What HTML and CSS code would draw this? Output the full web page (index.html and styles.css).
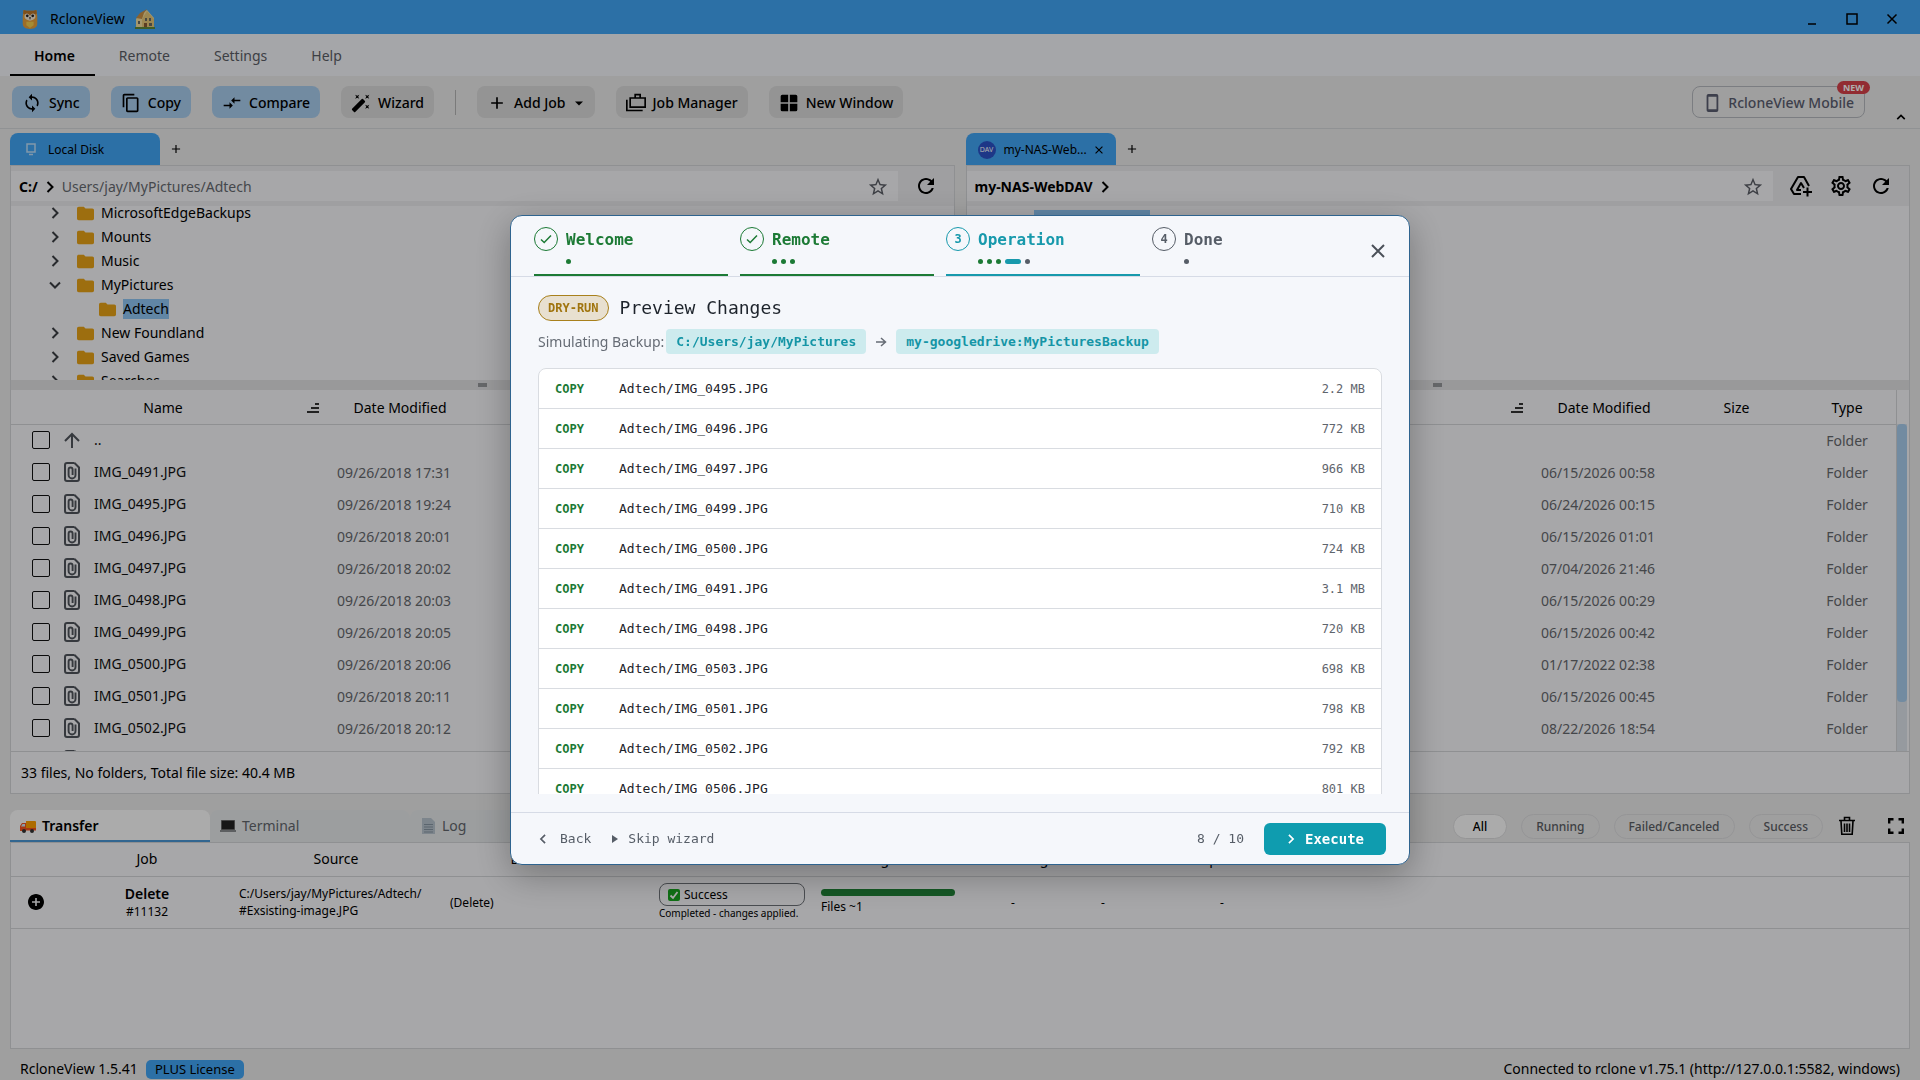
FILE: index.html
```html
<!DOCTYPE html>
<html lang="en">
<head>
<meta charset="utf-8">
<title>RcloneView</title>
<link rel="stylesheet" href="styles.css">
</head>
<body>
<svg class="sprite" aria-hidden="true">
  <symbol id="i-sync" viewBox="0 0 24 24"><path d="M12 4V1L8 5l4 4V6c3.31 0 6 2.69 6 6 0 1.01-.25 1.97-.7 2.8l1.46 1.46C19.54 15.03 20 13.57 20 12c0-4.42-3.58-8-8-8zm0 14c-3.31 0-6-2.69-6-6 0-1.01.25-1.97.7-2.8L5.24 7.74C4.46 8.97 4 10.43 4 12c0 4.42 3.58 8 8 8v3l4-4-4-4v3z"/></symbol>
  <symbol id="i-copy" viewBox="0 0 24 24"><path d="M16 1H4c-1.1 0-2 .9-2 2v14h2V3h12V1zm3 4H8c-1.1 0-2 .9-2 2v14c0 1.1.9 2 2 2h11c1.1 0 2-.9 2-2V7c0-1.1-.9-2-2-2zm0 16H8V7h11v14z"/></symbol>
  <symbol id="i-compare" viewBox="0 0 24 24"><path d="M9.01 14H2v2h7.01v3L13 15l-3.99-4v3zm5.98-1v-3H22V8h-7.01V5L11 9l3.99 4z"/></symbol>
  <symbol id="i-wizard" viewBox="0 0 24 24"><path d="M7.5 5.6L10 7 8.6 4.5 10 2 7.5 3.4 5 2l1.4 2.5L5 7zm12 9.8L17 14l1.4 2.5L17 19l2.5-1.4L22 19l-1.4-2.5L22 14zM22 2l-2.5 1.4L17 2l1.4 2.5L17 7l2.5-1.4L22 7l-1.4-2.5zm-7.63 5.29a1 1 0 00-1.41 0L1.29 18.96c-.39.39-.39 1.02 0 1.41l2.34 2.34c.39.39 1.02.39 1.41 0L16.7 11.05c.39-.39.39-1.02 0-1.41l-2.33-2.35z"/></symbol>
  <symbol id="i-add" viewBox="0 0 24 24"><path d="M19 13h-6v6h-2v-6H5v-2h6V5h2v6h6v2z"/></symbol>
  <symbol id="i-drop" viewBox="0 0 24 24"><path d="M4 9l8 8 8-8z"/></symbol>
  <symbol id="i-jobs" viewBox="0 0 24 24"><path fill="none" stroke="currentColor" stroke-width="2" d="M1 8v13h19M5 6h18v11H5zM11 6V2h6v4"/></symbol>
  <symbol id="i-window" viewBox="0 0 24 24"><path d="M4 2h7v9H2V4a2 2 0 012-2zm9 0h7a2 2 0 012 2v7h-9V2zM2 13h9v9H4a2 2 0 01-2-2v-7zm11 0h9v7a2 2 0 01-2 2h-7v-9z"/></symbol>
  <symbol id="i-phone" viewBox="0 0 16 20"><path fill-rule="evenodd" d="M4 0h9a2 2 0 012 2v16a2 2 0 01-2 2H4a2 2 0 01-2-2V2a2 2 0 012-2zm0 3v14h9V3z"/></symbol>
  <symbol id="i-refresh" viewBox="0 0 24 24"><path d="M17.65 6.35C16.2 4.9 14.21 4 12 4c-4.42 0-7.990 3.58-7.990 8s3.570 8 7.990 8c3.730 0 6.840-2.550 7.730-6h-2.080c-.82 2.330-3.040 4-5.650 4-3.310 0-6-2.690-6-6s2.690-6 6-6c1.660 0 3.140.69 4.220 1.780L13 11h7V4l-2.350 2.350z"/></symbol>
  <symbol id="i-star" viewBox="0 0 24 24"><path d="M22 9.24l-7.19-.62L12 2 9.19 8.63 2 9.24l5.46 4.73L5.82 21 12 17.27 18.18 21l-1.63-7.03L22 9.24zM12 15.4l-3.76 2.27 1-4.28-3.32-2.88 4.38-.38L12 6.1l1.71 4.04 4.38.38-3.32 2.88 1 4.28L12 15.4z"/></symbol>
  <symbol id="i-gear" viewBox="0 0 24 24"><path d="M19.43 12.98c.04-.32.07-.64.07-.98 0-.34-.03-.66-.07-.98l2.11-1.65c.19-.15.24-.42.12-.64l-2-3.46c-.09-.16-.26-.25-.44-.25-.06 0-.12.01-.17.03l-2.49 1c-.52-.4-1.08-.73-1.69-.98l-.38-2.65C14.46 2.18 14.25 2 14 2h-4c-.25 0-.46.18-.49.42l-.38 2.65c-.61.25-1.17.59-1.69.98l-2.49-1c-.06-.02-.12-.03-.18-.03-.17 0-.34.09-.43.25l-2 3.46c-.13.22-.07.49.12.64l2.11 1.65c-.04.32-.07.65-.07.98 0 .33.03.66.07.98l-2.11 1.65c-.19.15-.24.42-.12.64l2 3.46c.09.16.26.25.44.25.06 0 .12-.01.17-.03l2.49-1c.52.4 1.08.73 1.69.98l.38 2.65c.03.24.24.42.49.42h4c.25 0 .46-.18.49-.42l.38-2.65c.61-.25 1.17-.59 1.69-.98l2.49 1c.06.02.12.03.18.03.17 0 .34-.09.43-.25l2-3.46c.12-.22.07-.49-.12-.64l-2.11-1.65zm-1.98-1.71c.04.31.05.52.05.73 0 .21-.02.43-.05.73l-.14 1.13.89.7 1.08.84-.7 1.21-1.27-.51-1.04-.42-.9.68c-.43.32-.84.56-1.25.73l-1.06.43-.16 1.13-.2 1.35h-1.4l-.19-1.35-.16-1.13-1.06-.43c-.43-.18-.83-.41-1.23-.71l-.91-.7-1.06.43-1.27.51-.7-1.21 1.08-.84.89-.7-.14-1.13c-.03-.31-.05-.54-.05-.74s.02-.43.05-.73l.14-1.13-.89-.7-1.08-.84.7-1.21 1.27.51 1.04.42.9-.68c.43-.32.84-.56 1.25-.73l1.06-.43.16-1.13.2-1.35h1.39l.19 1.35.16 1.13 1.06.43c.43.18.83.41 1.23.71l.91.7 1.06-.43 1.27-.51.7 1.21-1.07.85-.89.7.14 1.13zM12 8c-2.21 0-4 1.79-4 4s1.79 4 4 4 4-1.79 4-4-1.79-4-4-4zm0 6c-1.1 0-2-.9-2-2s.9-2 2-2 2 .9 2 2-.9 2-2 2z"/></symbol>
  <symbol id="i-drive" viewBox="0 0 24 24"><path fill="none" stroke="currentColor" stroke-width="2" stroke-linejoin="round" d="M12 20H5l-3-5L9 3h6l5 9M12 16H8l4-7 3 5M14 18h9M18.500 13.500v9"/></symbol>
  <symbol id="i-folder" viewBox="2 4 20 16"><path d="M10 4H4c-1.100 0-1.990.9-1.990 2L2 18c0 1.100.9 2 2 2h16c1.100 0 2-.9 2-2V8c0-1.100-.9-2-2-2h-8l-2-2z"/></symbol>
  <symbol id="i-right" viewBox="0 0 12 12"><path fill="none" stroke="currentColor" stroke-width="2" d="M3.500 1l5 5-5 5"/></symbol>
  <symbol id="i-left" viewBox="0 0 12 12"><path fill="none" stroke="currentColor" stroke-width="2" d="M8.500 1l-5 5 5 5"/></symbol>
  <symbol id="i-down" viewBox="0 0 12 12"><path fill="none" stroke="currentColor" stroke-width="2" d="M1 3.500l5 5 5-5"/></symbol>
  <symbol id="i-up" viewBox="0 0 12 12"><path fill="none" stroke="currentColor" stroke-width="2" d="M1.500 8.500L6 4l4.500 4.500"/></symbol>
  <symbol id="i-close" viewBox="0 0 14 14"><path fill="none" stroke="currentColor" stroke-width="2" d="M1 1l12 12M13 1L1 13"/></symbol>
  <symbol id="i-sort" viewBox="0 0 12 12"><path d="M8 1h4v2H8zM4 5h8v2H4zM0 9h12v2H0z"/></symbol>
  <symbol id="i-arrow-up" viewBox="0 0 16 16"><path fill="none" stroke="currentColor" stroke-width="2" d="M8 16V2M1 9l7-7 7 7"/></symbol>
  <symbol id="i-file" viewBox="0 0 16 20"><path fill="none" stroke="currentColor" stroke-width="2" d="M10.500 1H3a2 2 0 00-2 2v14a2 2 0 002 2h10a2 2 0 002-2V5.500L10.500 1"/><path fill="none" stroke="currentColor" stroke-width="1.900" d="M11.500 6.500V13a3.400 3.400 0 01-6.900 0V7.500a2 2 0 014 0V13"/></symbol>
  <symbol id="i-plus-circle" viewBox="2 2 20 20"><path d="M12 2C6.480 2 2 6.480 2 12s4.480 10 10 10 10-4.480 10-10S17.520 2 12 2zm5 11h-4v4h-2v-4H7v-2h4V7h2v4h4v2z"/></symbol>
  <symbol id="i-trash" viewBox="0 0 16 20"><path fill="none" stroke="currentColor" stroke-width="1.600" d="M0 4.500h16M5.500 4V1.500h5V4M2 5l.8 13.200H13.200L14 5M5.500 7.500v8.500M8 7.500v8.500M10.500 7.500v8.500"/></symbol>
  <symbol id="i-full" viewBox="0 0 16 16"><path fill="none" stroke="currentColor" stroke-width="2.400" d="M1.200 5.500V1.200h4.300M10.500 1.200h4.300v4.300M14.800 10.500v4.300h-4.300M5.500 14.800H1.200v-4.300"/></symbol>
  <symbol id="i-check" viewBox="0 0 12 12"><path fill="none" stroke="currentColor" stroke-width="1.500" d="M1 6.500l3.200 3L11 2.500"/></symbol>
  <symbol id="i-arrow" viewBox="0 0 12 12"><path fill="none" stroke="currentColor" stroke-width="1.500" d="M1 6h9M6 2l4.500 4L6 10"/></symbol>
  <symbol id="i-play" viewBox="0 0 8 8"><path d="M1 0l6 4-6 4z"/></symbol>
</svg>

<div class="app">
  <header class="titlebar">
    <svg class="owl" viewBox="0 0 18 22"><path fill="#e9a13a" d="M2 1l3 1h8l3-1 1 7v8c0 4-3 6-8 6s-8-2-8-6V8z"/><path fill="#b9762a" d="M2 1l3 1h8l3-1 .6 4L9 9 1.400 5z"/><path fill="#f5ead6" d="M9 8C8 4 3 4 3 8s4 4 6 5c2-1 6-1 6-5s-5-4-6 0z"/><circle cx="6" cy="7.500" r="1.500" fill="#222"/><circle cx="12" cy="7.500" r="1.500" fill="#222"/><path fill="#222" d="M8 9h2l-1 3z"/><path fill="#f6cf4c" d="M5 14h8v4l-4 3-4-3z"/></svg>
    <span class="app-name">RcloneView</span>
    <svg class="house" viewBox="0 0 20 20"><path fill="#f3dfa0" d="M1 10l4-5 7-4 7 8v10H1z"/><path fill="#c98f45" d="M1 9l4-5 7-4-3 4-2 6z"/><path fill="#e6c878" d="M7 10l5-8 7 8v9H7z"/><path fill="#6b6a62" d="M3 12h2v3H3zm7-3h2v3h-2zm4 0h2v3h-2zm0 5h3v3h-3z"/><path fill="#8a5a34" d="M9 14h3v5H9z"/><path fill="#5d8a3a" d="M0 18h20v2H0z"/></svg>
    <div class="window-buttons">
      <button type="button" aria-label="Minimize"><svg viewBox="0 0 12 12"><path fill="none" stroke="#000" stroke-width="1.500" d="M2 11h8"/></svg></button>
      <button type="button" aria-label="Maximize"><svg viewBox="0 0 12 12"><path fill="none" stroke="#000" stroke-width="1.500" d="M1 1h10v10H1z"/></svg></button>
      <button type="button" aria-label="Close window"><svg viewBox="0 0 12 12"><path fill="none" stroke="#000" stroke-width="1.500" d="M1.500 1.500l9 9M10.500 1.500l-9 9"/></svg></button>
    </div>
  </header>

  <nav class="menu">
    <a href="#home" class="active">Home</a>
    <a href="#remote">Remote</a>
    <a href="#settings">Settings</a>
    <a href="#help">Help</a>
  </nav>

  <div class="toolbar">
    <button type="button" class="tool primary"><svg class="ico20"><use href="#i-sync"/></svg>Sync</button>
    <button type="button" class="tool primary"><svg class="ico20"><use href="#i-copy"/></svg>Copy</button>
    <button type="button" class="tool primary"><svg class="ico20"><use href="#i-compare"/></svg>Compare</button>
    <button type="button" class="tool"><svg class="ico20"><use href="#i-wizard"/></svg>Wizard</button>
    <span class="tool-sep"></span>
    <button type="button" class="tool"><svg class="ico20"><use href="#i-add"/></svg>Add Job<svg class="ico12"><use href="#i-drop"/></svg></button>
    <button type="button" class="tool"><svg class="ico20"><use href="#i-jobs"/></svg>Job Manager</button>
    <button type="button" class="tool"><svg class="ico20"><use href="#i-window"/></svg>New Window</button>
    <button type="button" class="tool mobile"><svg class="ico18"><use href="#i-phone"/></svg>RcloneView Mobile<span class="new">NEW</span></button>
    <button type="button" class="collapse" aria-label="Collapse toolbar"><svg class="ico10"><use href="#i-up"/></svg></button>
  </div>

  <main class="panes">
    <section class="pane">
      <div class="tabs">
        <button type="button" class="tab"><svg class="ico14 pc" viewBox="0 0 14 14"><path fill="none" stroke="#bfe0fb" stroke-width="1.500" d="M3 1h8v8H3zM5 11.500h4"/></svg><span>Local Disk</span></button>
        <button type="button" class="plain" aria-label="New tab"><svg class="ico14"><use href="#i-add"/></svg></button>
      </div>
      <div class="panel">
        <div class="pathbar">
          <div class="path"><b>C:/</b><svg class="ico12"><use href="#i-right"/></svg><span class="crumb">Users/jay/MyPictures/Adtech</span>
            <button type="button" class="plain star" aria-label="Bookmark"><svg class="ico22"><use href="#i-star"/></svg></button></div>
          <div class="path-tools"><button type="button" class="plain" aria-label="Refresh"><svg class="ico24"><use href="#i-refresh"/></svg></button></div>
        </div>
        <ul class="tree">
          <li><svg class="ico12"><use href="#i-right"/></svg><svg class="folder"><use href="#i-folder"/></svg><span>MicrosoftEdgeBackups</span></li>
          <li><svg class="ico12"><use href="#i-right"/></svg><svg class="folder"><use href="#i-folder"/></svg><span>Mounts</span></li>
          <li><svg class="ico12"><use href="#i-right"/></svg><svg class="folder"><use href="#i-folder"/></svg><span>Music</span></li>
          <li><svg class="ico12"><use href="#i-down"/></svg><svg class="folder"><use href="#i-folder"/></svg><span>MyPictures</span></li>
          <li class="child"><svg class="folder"><use href="#i-folder"/></svg><span class="selected">Adtech</span></li>
          <li><svg class="ico12"><use href="#i-right"/></svg><svg class="folder"><use href="#i-folder"/></svg><span>New Foundland</span></li>
          <li><svg class="ico12"><use href="#i-right"/></svg><svg class="folder"><use href="#i-folder"/></svg><span>Saved Games</span></li>
          <li><svg class="ico12"><use href="#i-right"/></svg><svg class="folder"><use href="#i-folder"/></svg><span>Searches</span></li>
        </ul>
        <div class="splitter"><i></i></div>
        <div class="files">
          <table class="local">
            <colgroup><col class="c-name"><col class="c-date"><col class="c-size"><col></colgroup>
            <thead><tr><th><div class="sort-head"><span>Name</span><svg class="ico12"><use href="#i-sort"/></svg></div></th><th>Date Modified</th><th>Size</th><th>Type</th></tr></thead>
            <tbody>
              <tr><td><label class="file"><input type="checkbox"><svg class="doc up"><use href="#i-arrow-up"/></svg>..</label></td><td></td><td></td><td></td></tr>
              <tr><td><label class="file"><input type="checkbox"><svg class="doc"><use href="#i-file"/></svg>IMG_0491.JPG</label></td><td>09/26/2018 17:31</td><td></td><td></td></tr>
              <tr><td><label class="file"><input type="checkbox"><svg class="doc"><use href="#i-file"/></svg>IMG_0495.JPG</label></td><td>09/26/2018 19:24</td><td></td><td></td></tr>
              <tr><td><label class="file"><input type="checkbox"><svg class="doc"><use href="#i-file"/></svg>IMG_0496.JPG</label></td><td>09/26/2018 20:01</td><td></td><td></td></tr>
              <tr><td><label class="file"><input type="checkbox"><svg class="doc"><use href="#i-file"/></svg>IMG_0497.JPG</label></td><td>09/26/2018 20:02</td><td></td><td></td></tr>
              <tr><td><label class="file"><input type="checkbox"><svg class="doc"><use href="#i-file"/></svg>IMG_0498.JPG</label></td><td>09/26/2018 20:03</td><td></td><td></td></tr>
              <tr><td><label class="file"><input type="checkbox"><svg class="doc"><use href="#i-file"/></svg>IMG_0499.JPG</label></td><td>09/26/2018 20:05</td><td></td><td></td></tr>
              <tr><td><label class="file"><input type="checkbox"><svg class="doc"><use href="#i-file"/></svg>IMG_0500.JPG</label></td><td>09/26/2018 20:06</td><td></td><td></td></tr>
              <tr><td><label class="file"><input type="checkbox"><svg class="doc"><use href="#i-file"/></svg>IMG_0501.JPG</label></td><td>09/26/2018 20:11</td><td></td><td></td></tr>
              <tr><td><label class="file"><input type="checkbox"><svg class="doc"><use href="#i-file"/></svg>IMG_0502.JPG</label></td><td>09/26/2018 20:12</td><td></td><td></td></tr>
              <tr><td><div class="file"><input type="checkbox" aria-label="Next file"><svg class="doc"><use href="#i-file"/></svg></div></td><td></td><td></td><td></td></tr>
            </tbody>
          </table>
        </div>
        <div class="summary">33 files, No folders, Total file size: 40.4 MB</div>
      </div>
    </section>

    <section class="pane">
      <div class="tabs">
        <button type="button" class="tab"><span class="dav">DAV</span><span>my-NAS-Web...</span><svg class="ico8"><use href="#i-close"/></svg></button>
        <button type="button" class="plain" aria-label="New tab"><svg class="ico14"><use href="#i-add"/></svg></button>
      </div>
      <div class="panel">
        <div class="pathbar">
          <div class="path"><b>my-NAS-WebDAV</b><svg class="ico12"><use href="#i-right"/></svg>
            <button type="button" class="plain star" aria-label="Bookmark"><svg class="ico22"><use href="#i-star"/></svg></button></div>
          <div class="path-tools">
            <button type="button" class="plain" aria-label="Add to drive"><svg class="ico24"><use href="#i-drive"/></svg></button>
            <button type="button" class="plain" aria-label="Settings"><svg class="ico24"><use href="#i-gear"/></svg></button>
            <button type="button" class="plain" aria-label="Refresh"><svg class="ico24"><use href="#i-refresh"/></svg></button>
          </div>
        </div>
        <ul class="tree root">
          <li><i class="root-icon"></i><span class="selected">my-NAS-WebDAV</span></li>
        </ul>
        <div class="splitter"><i></i></div>
        <div class="files">
          <table class="remote">
            <colgroup><col><col class="c-date"><col class="c-size"><col class="c-type"></colgroup>
            <thead><tr><th><div class="sort-head"><span></span><svg class="ico12"><use href="#i-sort"/></svg></div></th><th>Date Modified</th><th>Size</th><th>Type</th></tr></thead>
            <tbody>
              <tr><td></td><td></td><td></td><td>Folder</td></tr>
              <tr><td></td><td>06/15/2026 00:58</td><td></td><td>Folder</td></tr>
              <tr><td></td><td>06/24/2026 00:15</td><td></td><td>Folder</td></tr>
              <tr><td></td><td>06/15/2026 01:01</td><td></td><td>Folder</td></tr>
              <tr><td></td><td>07/04/2026 21:46</td><td></td><td>Folder</td></tr>
              <tr><td></td><td>06/15/2026 00:29</td><td></td><td>Folder</td></tr>
              <tr><td></td><td>06/15/2026 00:42</td><td></td><td>Folder</td></tr>
              <tr><td></td><td>01/17/2022 02:38</td><td></td><td>Folder</td></tr>
              <tr><td></td><td>06/15/2026 00:45</td><td></td><td>Folder</td></tr>
              <tr><td></td><td>08/22/2026 18:54</td><td></td><td>Folder</td></tr>
            </tbody>
          </table>
          <div class="scrollbar"><div class="track"><i></i></div></div>
        </div>
        <div class="summary"></div>
      </div>
    </section>
  </main>

  <section class="transfer">
    <div class="job-tabs">
      <button type="button" class="job-tab active"><svg class="ico16" viewBox="0 0 16 16"><path fill="#ffa000" d="M6 3h9a1 1 0 011 1v8H6z"/><path fill="#f4511e" d="M0 10V8l2-3h4v8H0zM6 10h10v2.500H6z"/><path fill="#cfe8f5" d="M2.500 6H5v2.500H1z"/><circle cx="4" cy="13" r="2" fill="#333"/><circle cx="12" cy="13" r="2" fill="#333"/></svg>Transfer</button>
      <button type="button" class="job-tab"><svg class="ico16" viewBox="0 0 16 16"><path fill="#8a8d90" d="M0 12h16v2H0z"/><path fill="#222" stroke="#666" d="M1.500 2.500h13v9h-13z"/></svg>Terminal</button>
      <button type="button" class="job-tab"><svg class="ico16" viewBox="0 0 16 16"><path fill="#b8c4ce" d="M2 0h9l4 4v12H2z"/><path stroke="#8796a3" d="M4 6.500h9M4 9h9M4 11.500h9M4 14h9"/></svg>Log</button>
      <div class="filters">
        <button type="button" class="filter on">All</button>
        <button type="button" class="filter">Running</button>
        <button type="button" class="filter">Failed/Canceled</button>
        <button type="button" class="filter">Success</button>
        <button type="button" class="plain trash" aria-label="Clear"><svg class="ico20"><use href="#i-trash"/></svg></button>
        <button type="button" class="plain" aria-label="Full screen"><svg class="ico16"><use href="#i-full"/></svg></button>
      </div>
    </div>
    <div class="job-panel">
      <table class="jobs">
        <colgroup><col class="j-open"><col class="j-job"><col class="j-src"><col class="j-dst"><col class="j-status"><col class="j-progress"><col class="j-a"><col class="j-b"><col class="j-c"><col></colgroup>
        <thead><tr><th></th><th>Job</th><th>Source</th><th class="dst-head">Destination</th><th>Status</th><th>Progress</th><th>Remaining</th><th>Size</th><th>Speed</th><th></th></tr></thead>
        <tbody><tr>
          <td class="mid"><button type="button" class="plain" aria-label="Expand job"><svg class="ico16"><use href="#i-plus-circle"/></svg></button></td>
          <td class="mid"><strong>Delete</strong><br>#11132</td>
          <td class="src">C:/Users/jay/MyPictures/Adtech/<br>#Exsisting-image.JPG</td>
          <td class="dst">(Delete)</td>
          <td><div class="status"><svg class="ico12" viewBox="0 0 12 12"><rect width="12" height="12" rx="2" fill="#17a51f"/><path fill="none" stroke="#fff" stroke-width="1.800" d="M2.500 6.500l2.500 2.500L9.500 3"/></svg>Success</div><div class="note">Completed - changes applied.</div></td>
          <td><div class="bar"></div><div class="count">Files ~1</div></td>
          <td class="mid">-</td><td class="mid">-</td><td class="mid">-</td><td></td>
        </tr></tbody>
      </table>
    </div>
  </section>

  <footer class="statusbar"><span>RcloneView 1.5.41</span><span class="license">PLUS License</span><span class="conn">Connected to rclone v1.75.1 (http://127.0.0.1:5582, windows)</span></footer>
</div>

<div class="overlay">
  <dialog open class="wizard" aria-labelledby="wizard-title">
    <header class="steps">
      <div class="step done"><span class="num"><svg class="ico12"><use href="#i-check"/></svg></span><span class="label">Welcome</span><span class="dots"><i></i></span></div>
      <div class="step done"><span class="num"><svg class="ico12"><use href="#i-check"/></svg></span><span class="label">Remote</span><span class="dots"><i></i><i></i><i></i></span></div>
      <div class="step current"><span class="num">3</span><span class="label">Operation</span><span class="dots"><i class="past"></i><i class="past"></i><i class="past"></i><i class="now"></i><i class="next"></i></span></div>
      <div class="step"><span class="num">4</span><span class="label">Done</span><span class="dots"><i></i></span></div>
      <button type="button" class="plain close" aria-label="Close"><svg class="ico14"><use href="#i-close"/></svg></button>
    </header>
    <div class="wizard-body">
      <div class="heading"><span class="dry">DRY-RUN</span><h1 id="wizard-title">Preview Changes</h1></div>
      <p class="route"><span>Simulating Backup:</span><code>C:/Users/jay/MyPictures</code><svg class="ico12"><use href="#i-arrow"/></svg><code>my-googledrive:MyPicturesBackup</code></p>
      <div class="changes">
        <ul>
          <li><b>COPY</b><span>Adtech/IMG_0495.JPG</span><em>2.2 MB</em></li>
          <li><b>COPY</b><span>Adtech/IMG_0496.JPG</span><em>772 KB</em></li>
          <li><b>COPY</b><span>Adtech/IMG_0497.JPG</span><em>966 KB</em></li>
          <li><b>COPY</b><span>Adtech/IMG_0499.JPG</span><em>710 KB</em></li>
          <li><b>COPY</b><span>Adtech/IMG_0500.JPG</span><em>724 KB</em></li>
          <li><b>COPY</b><span>Adtech/IMG_0491.JPG</span><em>3.1 MB</em></li>
          <li><b>COPY</b><span>Adtech/IMG_0498.JPG</span><em>720 KB</em></li>
          <li><b>COPY</b><span>Adtech/IMG_0503.JPG</span><em>698 KB</em></li>
          <li><b>COPY</b><span>Adtech/IMG_0501.JPG</span><em>798 KB</em></li>
          <li><b>COPY</b><span>Adtech/IMG_0502.JPG</span><em>792 KB</em></li>
          <li><b>COPY</b><span>Adtech/IMG_0506.JPG</span><em>801 KB</em></li>
        </ul>
      </div>
    </div>
    <footer class="wizard-foot">
      <button type="button" class="link"><svg class="ico10"><use href="#i-left"/></svg><span>Back</span></button>
      <button type="button" class="link skip"><svg class="ico8"><use href="#i-play"/></svg><span>Skip wizard</span></button>
      <span class="page">8 / 10</span>
      <button type="button" class="execute"><svg class="ico10"><use href="#i-right"/></svg>Execute</button>
    </footer>
  </dialog>
</div>
</body>
</html>
```
FILE: styles.css
```css
* { box-sizing: border-box; }

body {
  margin: 0;
  font-family: "Noto Sans", "Open Sans", sans-serif;
  font-size: 14px;
  line-height: 20px;
  color: #000;
  background: #ebebeb;
}

button { font: inherit; color: inherit; cursor: pointer; }
svg { display: block; flex: none; fill: currentColor; }
.sprite { position: absolute; width: 0; height: 0; }

.ico8 { width: 8px; height: 8px; }
.ico10 { width: 10px; height: 10px; }
.ico12 { width: 12px; height: 12px; }
.ico14 { width: 14px; height: 14px; }
.ico16 { width: 16px; height: 16px; }
.ico18 { width: 18px; height: 18px; }
.ico20 { width: 20px; height: 20px; }
.ico22 { width: 22px; height: 22px; }
.ico24 { width: 24px; height: 24px; }

.plain { display: flex; padding: 0; border: 0; background: none; }

.app {
  display: flex;
  flex-direction: column;
  height: 100vh;
  overflow: hidden;
}

/* Title bar */
.titlebar {
  display: flex;
  align-items: center;
  flex: none;
  height: 34px;
  padding: 4px 16px 0 20px;
  gap: 10px;
  background: #42a5f5;
}
.owl { width: 20px; height: 20px; }
.house { width: 20px; height: 20px; }
.window-buttons { display: flex; gap: 16px; margin-left: auto; }
.window-buttons button {
  display: flex;
  align-items: center;
  justify-content: center;
  width: 24px;
  height: 24px;
  padding: 0;
  border: 0;
  background: none;
}
.window-buttons svg { width: 12px; height: 12px; }

/* Menu */
.menu {
  display: flex;
  flex: none;
  height: 42px;
  padding: 0 10px;
  background: #f4f5f9;
}
.menu a {
  display: flex;
  align-items: center;
  padding: 4px 20px 0 24px;
  color: #5b5e66;
  text-decoration: none;
  border-bottom: 2px solid transparent;
}
.menu .active { color: #000; font-weight: 600; border-color: #000; }

/* Toolbar */
.toolbar {
  display: flex;
  align-items: center;
  flex: none;
  gap: 21px;
  height: 53px;
  padding: 0 14px 0 12px;
  border-bottom: 1px solid #d5d7da;
}
.tool {
  display: flex;
  align-items: center;
  gap: 7px;
  height: 32px;
  padding: 2px 10px 0;
  border: 0;
  border-radius: 8px;
  background: #dadada;
  font-weight: 500;
  white-space: nowrap;
}
.tool.primary { background: #a9cdee; }
.tool-sep { width: 1px; height: 25px; background: #b4b4b4; }
.mobile {
  position: relative;
  margin-left: auto;
  margin-right: 10px;
  border: 1px solid #b5b8be;
  background: none;
  color: #5b5e70;
}
.new {
  position: absolute;
  top: -6px;
  right: -6px;
  padding: 0 6px;
  border-radius: 7px;
  background: #d8424a;
  color: #fff;
  font-size: 9px;
  font-weight: 700;
  line-height: 13px;
}
.collapse {
  display: flex;
  align-self: flex-end;
  margin: 0 0 6px;
  padding: 0;
  border: 0;
  background: none;
}

/* Explorer panes */
.panes {
  display: flex;
  flex: 1;
  gap: 11px;
  min-height: 0;
  padding: 4px 10px 0;
}
.pane { display: flex; flex: 1; flex-direction: column; min-width: 0; }
.tabs { display: flex; align-items: center; gap: 9px; flex: none; }
.tab {
  display: flex;
  align-items: center;
  gap: 8px;
  width: 150px;
  height: 32px;
  padding: 2px 12px 0;
  border: 0;
  border-radius: 8px 8px 0 0;
  background: #42a5f5;
  font-size: 12px;
  white-space: nowrap;
}
.pc { margin: 0 2px; }
.dav {
  width: 18px;
  border-radius: 9px;
  background: #2b52c8;
  color: #fff;
  font-size: 7px;
  line-height: 18px;
  text-align: center;
}
.panel {
  display: flex;
  flex: 1;
  flex-direction: column;
  min-height: 0;
  border: 1px solid #d3d5d8;
  background: #f6f6f9;
}
.pathbar {
  display: flex;
  flex: none;
  height: 40px;
  padding: 5px 0;
  background: #ebebee;
}
.path {
  display: flex;
  align-items: center;
  flex: 1;
  gap: 6px;
  padding: 1px 9px 0 8px;
  background: #f7f7fa;
}
.crumb { color: #666a70; }
.star { margin-left: auto; color: #5b5e66; }
.path-tools { display: flex; align-items: center; gap: 16px; padding: 0 16px; }

.tree {
  flex: none;
  height: 174px;
  margin: 0;
  padding: 0;
  overflow: hidden;
  list-style: none;
}
.tree li {
  display: flex;
  align-items: center;
  gap: 7px;
  height: 24px;
  padding-left: 38px;
}
.tree li:first-child { margin-top: -5px; }
.tree.root li:first-child { margin-top: 4px; }
.tree .child { padding-left: 88px; }
.tree .ico12 { color: #3c3f44; margin-right: 9px; }
.folder { width: 17px; height: 15px; color: #e8a317; }
.selected { background: #8fc6f4; }
.root-icon { width: 12px; height: 12px; margin-right: 10px; border-radius: 6px; background: #e0b050; }
.root .selected { padding-right: 4px; line-height: 24px; }

.splitter {
  display: flex;
  align-items: center;
  justify-content: center;
  flex: none;
  height: 10px;
  background: #e2e2e4;
}
.splitter i { width: 9px; height: 4px; background: #96989b; }

.files { display: flex; flex: 1; min-height: 0; overflow: hidden; border-bottom: 1px solid #d3d5d8; }
.files table { flex: 1; width: 100%; border-collapse: collapse; table-layout: fixed; align-self: flex-start; }
.files th { height: 34px; padding: 2px 0 0; font-weight: 400; border-bottom: 1px solid #d3d5d8; }
.files td { height: 32px; padding: 2px 8px 0; color: #66696e; white-space: nowrap; }
.files td:last-child { text-align: center; }
.files td:first-child { padding-top: 0; color: #111; }
.c-name { width: 318px; }
.c-date { width: 142px; }
.c-size { width: 123px; }
.c-type { width: 98px; }
.sort-head { display: flex; align-items: center; padding: 0 10px 0 8px; }
.sort-head span { flex: 1; }
.sort-head svg { color: #333; }
.file { display: flex; align-items: center; gap: 14px; padding-left: 13px; }
.file input {
  appearance: none;
  width: 18px;
  height: 18px;
  margin: 0;
  border: 1px solid #111;
  border-radius: 2px;
}
.doc { width: 16px; height: 20px; color: #50555c; }
.scrollbar {
  display: flex;
  width: 11px;
  margin-right: 2px;
  padding-top: 34px;
  border-left: 1px solid #d3d5d8;
}
.track { flex: 1; background: #dde4ea; }
.track i { display: block; height: 85%; border-radius: 4px; background: #a9cdee; }
.summary { flex: none; height: 41px; padding: 11px 10px; }

/* Transfer list */
.transfer { display: flex; flex: none; flex-direction: column; height: 255px; padding: 16px 10px 0; }
.job-tabs { display: flex; flex: none; height: 32px; }
.job-tab {
  display: flex;
  align-items: center;
  gap: 6px;
  width: 200px;
  padding: 1px 10px 0;
  border: 0;
  border-radius: 8px 8px 0 0;
  border-bottom: 2px solid transparent;
  background: #e6e9eb;
  color: #62666c;
}
.job-tab.active { background: #fdfdfd; border-color: #4a97d4; color: #000; font-weight: 600; }
.filters { display: flex; align-items: center; gap: 14px; margin-left: auto; padding-right: 6px; }
.filter {
  height: 25px;
  padding: 1px 14px 0;
  border: 1px solid #dcdcde;
  border-radius: 13px;
  background: none;
  color: #5b5e64;
  font-size: 12px;
  font-weight: 500;
  line-height: 16px;
}
.filter.on { padding: 1px 19px 0; background: #fdfdfd; color: #000; }
.trash { margin: 0 17px 0 0; }
.job-panel { flex: 1; border: 1px solid #d3d5d8; background: #f6f6f9; }
.jobs { width: 100%; border-collapse: collapse; table-layout: fixed; }
.jobs th { height: 33px; padding: 0; font-weight: 400; border-bottom: 1px solid #d3d5d8; }
.jobs .dst-head { padding-left: 5px; }
.jobs td { height: 52px; padding: 0; font-size: 12px; line-height: 17px; border-bottom: 1px solid #d3d5d8; }
.jobs .mid { text-align: center; }
.jobs .plain { margin: 0 auto 0 17px; }
.jobs strong { font-size: 14px; font-weight: 600; }
.jobs .src { padding-left: 10px; }
.jobs .dst { padding-left: 7px; }
.j-open { width: 54px; }
.j-job { width: 164px; }
.j-src { width: 214px; }
.j-dst { width: 206px; }
.j-status { width: 162px; }
.j-progress { width: 152px; }
.j-a { width: 100px; }
.j-b { width: 80px; }
.j-c { width: 158px; }
.status {
  display: flex;
  align-items: center;
  gap: 4px;
  width: 146px;
  height: 23px;
  margin-left: 10px;
  padding: 0 8px;
  border: 1px solid #6e7278;
  border-radius: 8px;
}
.note { margin-left: 10px; font-size: 10px; line-height: 15px; white-space: nowrap; }
.bar { width: 134px; height: 7px; margin: 0 0 2px 10px; border-radius: 4px; background: #1f8036; }
.count { margin-left: 10px; }

/* Status bar */
.statusbar {
  display: flex;
  align-items: center;
  flex: none;
  gap: 8px;
  height: 31px;
  padding: 9px 20px 0;
}
.license { padding: 0 9px; border-radius: 5px; background: #42a5f5; font-size: 13px; line-height: 19px; }
.conn { margin-left: auto; }

/* Wizard dialog */
.overlay {
  position: fixed;
  inset: 0;
  display: flex;
  align-items: center;
  justify-content: center;
  background: rgba(0, 0, 0, .32);
}
.wizard {
  position: static;
  display: flex;
  flex-direction: column;
  width: 900px;
  max-width: 94vw;
  height: 650px;
  max-height: 94vh;
  margin: 0;
  padding: 0;
  border: 1px solid #2f648f;
  border-radius: 12px;
  background: #f5f7fb;
  color: #1d232b;
  font-family: "DejaVu Sans Mono", "Liberation Mono", monospace;
  box-shadow: 0 10px 36px rgba(0, 0, 0, .3);
  overflow: hidden;
}
.steps {
  display: flex;
  flex: none;
  gap: 12px;
  height: 61px;
  padding: 0 23px;
  border-bottom: 1px solid #d6dbe6;
}
.step {
  display: grid;
  grid-template-columns: 24px 1fr;
  grid-template-rows: 24px 5px;
  column-gap: 8px;
  row-gap: 8px;
  flex: none;
  width: 194px;
  padding-top: 11px;
  border-bottom: 2px solid transparent;
  color: #565d67;
}
.step.done { color: #1c7a35; border-color: #1c7a35; }
.step.current { color: #1799ac; border-color: #1799ac; }
.num {
  display: flex;
  align-items: center;
  justify-content: center;
  border: 1px solid currentColor;
  border-radius: 12px;
  font-size: 12px;
  font-weight: 700;
}
.label { font-size: 16px; font-weight: 700; line-height: 26px; }
.dots { display: flex; grid-column: 2; gap: 4px; }
.dots i { width: 5px; height: 5px; border-radius: 3px; background: currentColor; }
.dots .past { background: #1c7a35; }
.dots .now { width: 16px; }
.dots .next { background: #565d67; }
.close { margin: auto 0 auto auto; color: #4a5058; padding: 10px 1px 0; }

.wizard-body { display: flex; flex: 1; flex-direction: column; min-height: 0; padding: 18px 27px; }
.heading { display: flex; align-items: center; gap: 11px; }
.dry {
  padding: 0 9px;
  border: 1px solid #a8801c;
  border-radius: 13px;
  background: #e8e0d0;
  color: #a0740e;
  font-size: 12px;
  font-weight: 700;
  line-height: 24px;
}
h1 { margin: 0; font-size: 18px; font-weight: 400; line-height: 24px; }
.route { display: flex; align-items: center; margin: 8px 0 14px; color: #666c75; }
.route span { margin-right: 2px; font-family: "Noto Sans", "Open Sans", sans-serif; }
.route code {
  padding: 0 10px;
  border-radius: 4px;
  background: #cdebee;
  color: #1595a6;
  font-family: inherit;
  font-size: 13px;
  font-weight: 700;
  line-height: 25px;
}
.route svg { margin: 0 9px; }
.changes { flex: 1; min-height: 0; overflow: hidden; }
.changes ul {
  margin: 0;
  padding: 0;
  list-style: none;
  border: 1px solid #d9dce1;
  border-radius: 8px;
  background: #fff;
  font-size: 13px;
}
.changes li { display: flex; align-items: center; height: 40px; padding: 0 16px; border-bottom: 1px solid #d9dce1; }
.changes li:last-child { border-bottom: 0; }
.changes b { width: 64px; color: #1c7a35; font-size: 12px; }
.changes em { margin-left: auto; color: #5f656d; font-size: 12px; font-style: normal; }

.wizard-foot {
  display: flex;
  align-items: center;
  flex: none;
  height: 52px;
  padding: 0 23px 0 27px;
  border-top: 1px solid #d6dbe6;
  font-size: 13px;
  color: #565d67;
}
.link { display: flex; align-items: center; gap: 12px; padding: 0; border: 0; background: none; }
.skip { gap: 9px; margin-left: 20px; }
.page { margin: 0 20px 0 auto; }
.execute {
  display: flex;
  align-items: center;
  gap: 9px;
  height: 32px;
  padding: 0 22px;
  border: 0;
  border-radius: 6px;
  background: #0f9caf;
  color: #fff;
  font-size: 14px;
  font-weight: 700;
}
```
